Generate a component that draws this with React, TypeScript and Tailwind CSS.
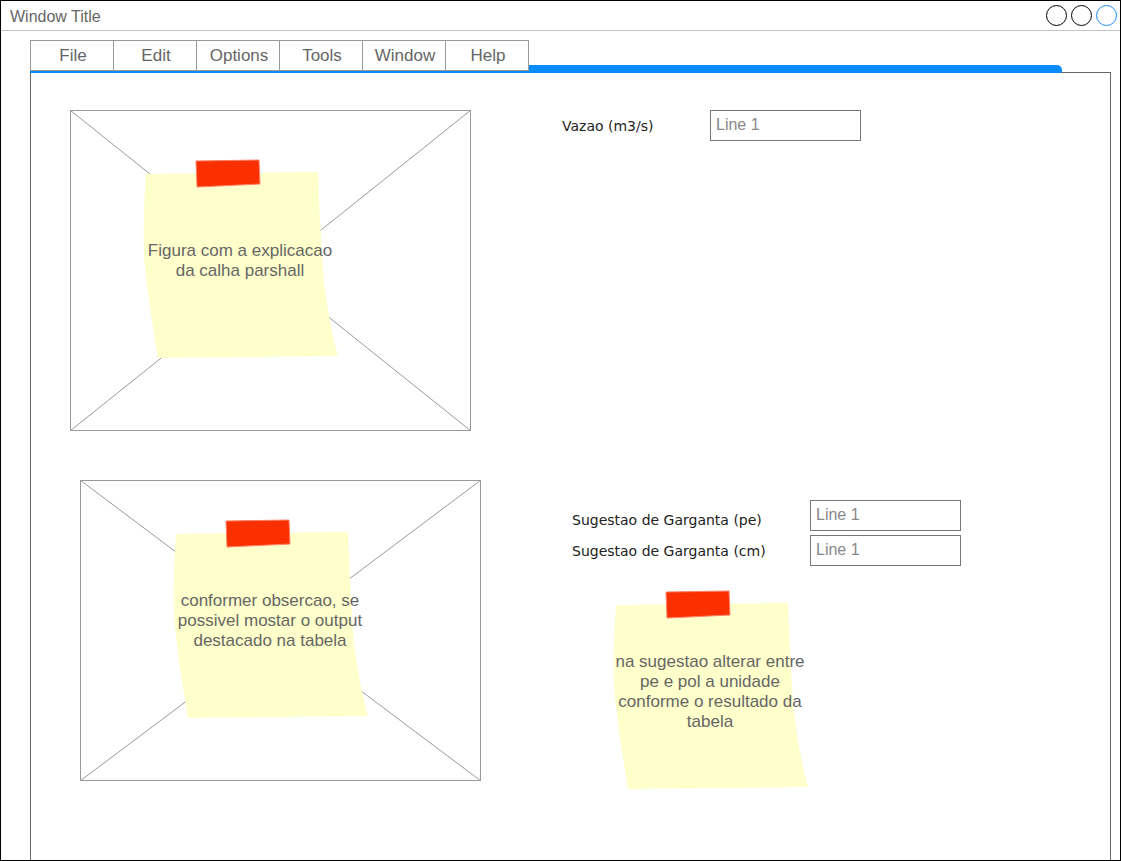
import React from "react";

const tabs = ["File", "Edit", "Options", "Tools", "Window", "Help"];

function Placeholder({ w, h }: { w: number; h: number }) {
  return (
    <svg width={w} height={h} className="block">
      <rect x={0.5} y={0.5} width={w - 1} height={h - 1} fill="white" stroke="#999" />
      <line x1={0} y1={0} x2={w} y2={h} stroke="#999" />
      <line x1={w} y1={0} x2={0} y2={h} stroke="#999" />
    </svg>
  );
}

function Sticky({ lines }: { lines: string[] }) {
  return (
    <div className="relative w-[200px] h-[202px]">
      <svg width={200} height={202} className="absolute left-0 top-0">
        <path
          d="M6 16 L178 14 Q181 90 184 125 Q190 170 198 198 L18 200 Q8 140 4 100 Q3 50 6 16 Z"
          fill="#ffffcc"
        />
        <path d="M56 3 L119 2 L120 26 L57 29 Z" fill="#fa3000" stroke="#ff8066" strokeWidth={1} />
      </svg>
      <div className="absolute left-0 top-[20px] w-[200px] h-[166px] flex items-center justify-center text-center text-[17px] leading-[20px] text-[#666] [font-family:'Liberation_Sans',Arial,sans-serif] whitespace-nowrap">
        <div>
          {lines.map((l) => (
            <div key={l}>{l}</div>
          ))}
        </div>
      </div>
    </div>
  );
}

function Field() {
  return (
    <div className="w-[151px] h-[31px] border border-[#777] bg-white pl-[5px] text-[16px] leading-[28px] text-[#888] [font-family:'Liberation_Sans',Arial,sans-serif]">
      Line 1
    </div>
  );
}

export default function App() {
  const label = "text-[14px] text-[#222] [font-family:'DejaVu_Sans',Verdana,sans-serif]";
  return (
    <div className="w-[1121px] h-[861px] border border-black bg-white flex flex-col overflow-hidden">
      <div className="h-[30px] shrink-0 border-b border-[#c4c4c4] flex items-center justify-between pl-[9px] pr-[3px]">
        <span className="text-[16px] pt-[2px] text-[#666] [font-family:'Liberation_Sans',Arial,sans-serif]">
          Window Title
        </span>
        <div className="flex gap-[4px] -mt-[1px]">
          <div className="w-[21px] h-[21px] rounded-full border border-black" />
          <div className="w-[21px] h-[21px] rounded-full border border-black" />
          <div className="w-[21px] h-[21px] rounded-full border border-[#1a8cff]" />
        </div>
      </div>

      <div className="ml-[29px] mt-[9px] w-[1081px] flex flex-col flex-1">
        <div className="flex items-end">
          <div className="flex h-[31px] border border-[#999] bg-white">
            {tabs.map((t, i) => (
              <div
                key={t}
                className={`flex items-center justify-center pl-[2px] text-[17px] text-[#666] [font-family:'Liberation_Sans',Arial,sans-serif] ${
                  i > 0 ? "w-[83px] border-l border-[#999]" : "w-[82px]"
                }`}
              >
                {t}
              </div>
            ))}
          </div>
          <div className="w-[533px] h-[6px] bg-[#0a8cff] rounded-tr-[5px]" />
        </div>
        <div className="w-[1032px] h-[2px] bg-[#0a8cff]" />
        <div className="flex-1 border-l border-r border-[#666] relative">
          <div className="absolute right-[-1px] top-[-1px] w-[50px] border-t border-[#666]" />

          <div className="flex items-start pl-[39px] pt-[37px]">
            <div className="relative">
              <Placeholder w={401} h={321} />
              <div className="absolute left-[70px] top-[48px]">
                <Sticky lines={["Figura com a explicacao", "da calha parshall"]} />
              </div>
            </div>
            <div className="ml-[91px] flex items-center">
              <div className={`${label} w-[148px] pt-[2px]`}>Vazao (m3/s)</div>
              <Field />
            </div>
          </div>

          <div className="flex items-start pl-[49px] pt-[49px]">
            <div className="relative">
              <Placeholder w={401} h={301} />
              <div className="absolute left-[90px] top-[38px]">
                <Sticky lines={["conformer obsercao, se", "possivel mostar o output", "destacado na tabela"]} />
              </div>
            </div>
            <div className="ml-[91px] pt-[20px] flex flex-col">
              <div className="flex items-center">
                <div className={`${label} w-[238px] pt-[10px]`}>Sugestao de Garganta (pe)</div>
                <Field />
              </div>
              <div className="flex items-center mt-[4px]">
                <div className={`${label} w-[238px] pt-[1px]`}>Sugestao de Garganta (cm)</div>
                <Field />
              </div>
              <div className="ml-[38px] mt-[23px]">
                <Sticky lines={["na sugestao alterar entre", "pe e pol a unidade", "conforme o resultado da", "tabela"]} />
              </div>
            </div>
          </div>
        </div>
      </div>
    </div>
  );
}
